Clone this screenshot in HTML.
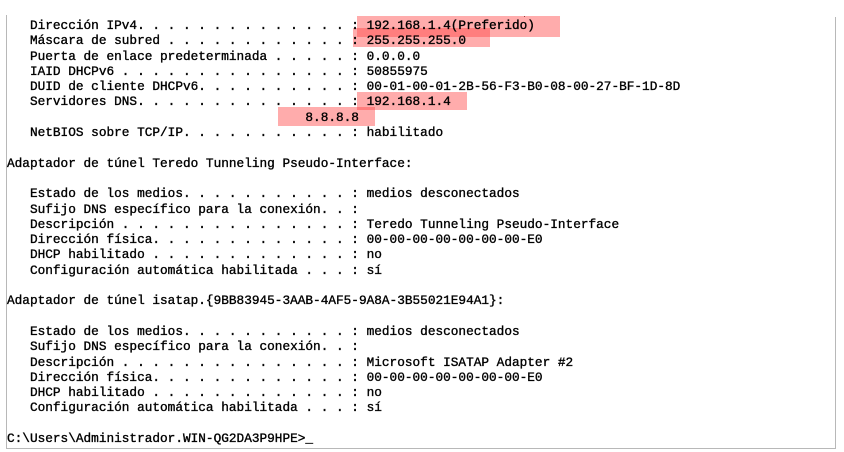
<!DOCTYPE html>
<html><head><meta charset="utf-8"><style>
html,body{margin:0;padding:0;background:#fff;width:844px;height:452px;overflow:hidden;position:relative}
pre{position:absolute;left:7px;top:18px;margin:0;font-family:"Liberation Mono",monospace;font-size:12.75px;line-height:15.3px;color:#000;-webkit-text-stroke:0.35px #000;z-index:2}
.hl{position:absolute;background:rgba(255,70,70,0.45);z-index:1}
.b{position:absolute;background:#b8b8b8}
</style></head><body>
<div class="b" style="left:6px;top:15px;width:1px;height:434px"></div>
<div class="b" style="left:835px;top:17px;width:1px;height:432px"></div>
<div class="b" style="left:6px;top:448px;width:830px;height:1px"></div>
<div class="b" style="left:524px;top:16px;width:1px;height:1px;background:#333"></div>
<div class="hl" style="left:357px;top:16px;width:203px;height:21px"></div>
<div class="hl" style="left:353px;top:28px;width:137px;height:19px"></div>
<div class="hl" style="left:357px;top:92px;width:110px;height:18px"></div>
<div class="hl" style="left:278px;top:107px;width:97px;height:19px"></div>
<pre>   Dirección IPv4. . . . . . . . . . . . . . : 192.168.1.4(Preferido)
   Máscara de subred . . . . . . . . . . . . : 255.255.255.0
   Puerta de enlace predeterminada . . . . . : 0.0.0.0
   IAID DHCPv6 . . . . . . . . . . . . . . . : 50855975
   DUID de cliente DHCPv6. . . . . . . . . . : 00-01-00-01-2B-56-F3-B0-08-00-27-BF-1D-8D
   Servidores DNS. . . . . . . . . . . . . . : 192.168.1.4
                                       8.8.8.8
   NetBIOS sobre TCP/IP. . . . . . . . . . . : habilitado

Adaptador de túnel Teredo Tunneling Pseudo-Interface:

   Estado de los medios. . . . . . . . . . . : medios desconectados
   Sufijo DNS específico para la conexión. . :
   Descripción . . . . . . . . . . . . . . . : Teredo Tunneling Pseudo-Interface
   Dirección física. . . . . . . . . . . . . : 00-00-00-00-00-00-00-E0
   DHCP habilitado . . . . . . . . . . . . . : no
   Configuración automática habilitada . . . : sí

Adaptador de túnel isatap.{9BB83945-3AAB-4AF5-9A8A-3B55021E94A1}:

   Estado de los medios. . . . . . . . . . . : medios desconectados
   Sufijo DNS específico para la conexión. . :
   Descripción . . . . . . . . . . . . . . . : Microsoft ISATAP Adapter #2
   Dirección física. . . . . . . . . . . . . : 00-00-00-00-00-00-00-E0
   DHCP habilitado . . . . . . . . . . . . . : no
   Configuración automática habilitada . . . : sí

C:\Users\Administrador.WIN-QG2DA3P9HPE>_</pre>
</body></html>
